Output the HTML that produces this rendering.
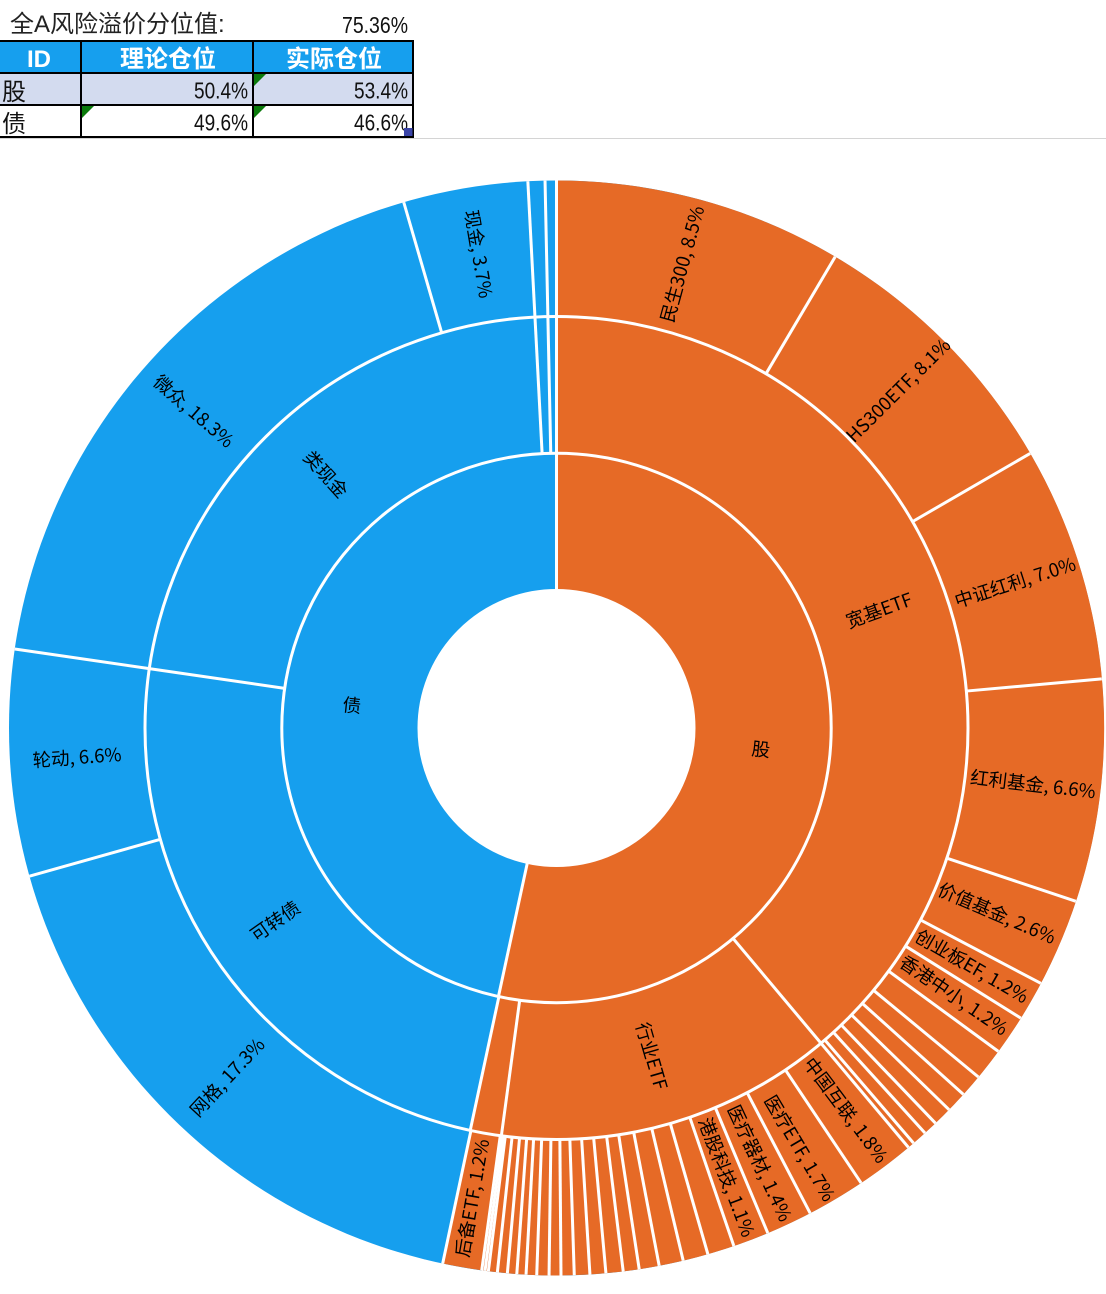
<!DOCTYPE html>
<html><head><meta charset="utf-8"><title>风险溢价</title>
<style>
html,body{margin:0;padding:0;background:#fff;width:1106px;height:1294px;overflow:hidden}
svg{display:block}
.t{font-family:"Liberation Sans","Noto Sans CJK SC",sans-serif;fill:#111}
.n{font-size:23px;text-anchor:end}
.h{font-family:"Liberation Sans","Noto Sans CJK SC",sans-serif;font-size:24px;font-weight:700;fill:#fff;text-anchor:middle}
.c text{font-family:"Noto Sans CJK SC","WenQuanYi Zen Hei",sans-serif;font-size:18.5px;fill:#000;text-anchor:middle;dominant-baseline:central}
.w{stroke:#fff;stroke-width:3;fill:none}
</style></head><body>
<svg xmlns="http://www.w3.org/2000/svg" width="1106" height="1294" viewBox="0 0 1106 1294">
<defs>
<line id="a" x1="556.5" y1="180.5" x2="556.5" y2="316.5" stroke="#fff" stroke-width="3"/>
<line id="b" x1="556.5" y1="316.5" x2="556.5" y2="453.3" stroke="#fff" stroke-width="3"/>
<line id="d" x1="556.5" y1="453.3" x2="556.5" y2="590" stroke="#fff" stroke-width="3"/>
</defs>

<!-- table -->
<text class="t" x="10" y="32" font-size="24" style="fill:#222">全A风险溢价分位值:</text>
<text class="t n" x="408" y="33" textLength="66" lengthAdjust="spacingAndGlyphs">75.36%</text>
<rect x="0" y="138" width="1106" height="1" fill="#d4d4d4"/>
<rect x="0" y="41" width="413" height="32" fill="#169FEE"/>
<rect x="0" y="73" width="413" height="32" fill="#D3DBEF"/>
<rect x="0" y="105" width="413" height="32" fill="#fff"/>
<g stroke="#000" stroke-width="2">
<line x1="0" y1="41" x2="414" y2="41"/><line x1="0" y1="73" x2="414" y2="73"/>
<line x1="0" y1="105" x2="414" y2="105"/><line x1="0" y1="137" x2="414" y2="137"/>
<line x1="81" y1="40" x2="81" y2="138"/><line x1="253" y1="40" x2="253" y2="138"/><line x1="413" y1="40" x2="413" y2="138"/>
</g>
<text class="h" x="39" y="67">ID</text>
<text class="h" x="168" y="67">理论仓位</text>
<text class="h" x="334" y="67">实际仓位</text>
<text class="t" x="2" y="100" font-size="24">股</text>
<text class="t" x="2" y="132" font-size="24">债</text>
<text class="t n" x="248" y="98.5" textLength="54" lengthAdjust="spacingAndGlyphs">50.4%</text>
<text class="t n" x="408" y="98.5" textLength="54" lengthAdjust="spacingAndGlyphs">53.4%</text>
<text class="t n" x="248" y="130.5" textLength="54" lengthAdjust="spacingAndGlyphs">49.6%</text>
<text class="t n" x="408" y="130.5" textLength="54" lengthAdjust="spacingAndGlyphs">46.6%</text>
<g fill="#0B7A0B">
<polygon points="254,74 266,74 254,86"/>
<polygon points="82,106 94,106 82,118"/>
<polygon points="254,106 266,106 254,118"/>
</g>
<rect x="404" y="128" width="8.5" height="8" fill="#3B45A8"/>

<!-- sunburst fills -->
<circle cx="556.5" cy="728" r="547.5" fill="#169FEE"/>
<path d="M556.5 728V180.5A547.5 547.5 0 1 1 442.2 1263.4Z" fill="#E66A26"/>
<circle class="w" cx="556.5" cy="728" r="411.5"/>
<circle class="w" cx="556.5" cy="728" r="274.7"/>
<circle cx="556.5" cy="728" r="138.5" fill="#fff" stroke="#fff" stroke-width="1"/>

<!-- inner ring radials -->
<use href="#d" transform="rotate(0 556.5 728)"/>
<use href="#d" transform="rotate(192.2 556.5 728)"/>

<!-- middle ring radials -->
<use href="#b" transform="rotate(0 556.5 728)"/>
<use href="#b" transform="rotate(140 556.5 728)"/>
<use href="#b" transform="rotate(187.7 556.5 728)"/>
<use href="#b" transform="rotate(192.1 556.5 728)"/>
<use href="#b" transform="rotate(278.3 556.5 728)"/>
<use href="#b" transform="rotate(357 556.5 728)"/>
<use href="#b" transform="rotate(358.8 556.5 728)"/>

<!-- outer ring radials -->
<use href="#a" transform="rotate(0 556.5 728)"/>
<use href="#a" transform="rotate(30.6 556.5 728)"/>
<use href="#a" transform="rotate(59.9 556.5 728)"/>
<use href="#a" transform="rotate(84.85 556.5 728)"/>
<use href="#a" transform="rotate(108.45 556.5 728)"/>
<use href="#a" transform="rotate(117.8 556.5 728)"/>
<use href="#a" transform="rotate(122 556.5 728)"/>
<use href="#a" transform="rotate(126.2 556.5 728)"/>
<use href="#a" transform="rotate(129.6 556.5 728)"/>
<use href="#a" transform="rotate(132 556.5 728)"/>
<use href="#a" transform="rotate(134.2 556.5 728)"/>
<use href="#a" transform="rotate(136.2 556.5 728)"/>
<use href="#a" transform="rotate(137.7 556.5 728)"/>
<use href="#a" transform="rotate(139.3 556.5 728)"/>
<use href="#a" transform="rotate(140 556.5 728)"/>
<use href="#a" transform="rotate(146.2 556.5 728)"/>
<use href="#a" transform="rotate(152.4 556.5 728)"/>
<use href="#a" transform="rotate(157.3 556.5 728)"/>
<use href="#a" transform="rotate(161.1 556.5 728)"/>
<use href="#a" transform="rotate(163.95 556.5 728)"/>
<use href="#a" transform="rotate(166.62 556.5 728)"/>
<use href="#a" transform="rotate(169.19 556.5 728)"/>
<use href="#a" transform="rotate(171.31 556.5 728)"/>
<use href="#a" transform="rotate(173 556.5 728)"/>
<use href="#a" transform="rotate(174.82 556.5 728)"/>
<use href="#a" transform="rotate(176.5 556.5 728)"/>
<use href="#a" transform="rotate(178.14 556.5 728)"/>
<use href="#a" transform="rotate(179.53 556.5 728)"/>
<use href="#a" transform="rotate(180.78 556.5 728)"/>
<use href="#a" transform="rotate(182.07 556.5 728)"/>
<use href="#a" transform="rotate(183.19 556.5 728)"/>
<use href="#a" transform="rotate(184.16 556.5 728)"/>
<use href="#a" transform="rotate(185.15 556.5 728)"/>
<use href="#a" transform="rotate(186.2 556.5 728)"/>
<use href="#a" transform="rotate(187.15 556.5 728)"/>
<use href="#a" transform="rotate(187.5 556.5 728)"/>
<use href="#a" transform="rotate(187.85 556.5 728)"/>
<use href="#a" transform="rotate(192 556.5 728)"/>
<use href="#a" transform="rotate(254.3 556.5 728)"/>
<use href="#a" transform="rotate(278.3 556.5 728)"/>
<use href="#a" transform="rotate(343.8 556.5 728)"/>
<use href="#a" transform="rotate(357 556.5 728)"/>
<use href="#a" transform="rotate(358.8 556.5 728)"/>

<!-- labels -->
<g class="c">
<text x="761" y="749" transform="rotate(6 761 749)">股</text>
<text x="352" y="705" transform="rotate(6 352 705)">债</text>
<text x="879" y="610" transform="rotate(-20 879 610)">宽基ETF</text>
<text x="652" y="1056" transform="rotate(73.8 652 1056)">行业ETF</text>
<text x="326" y="474" transform="rotate(47.9 326 474)">类现金</text>
<text x="275" y="921" transform="rotate(-35 275 921)">可转债</text>
<text x="682" y="264" transform="rotate(-74.7 682 264)">民生300, 8.5%</text>
<text x="898" y="390" transform="rotate(-44.8 898 390)">HS300ETF, 8.1%</text>
<text x="1015" y="582" transform="rotate(-17.7 1015 582)">中证红利, 7.0%</text>
<text x="1033" y="784" transform="rotate(6.7 1033 784)">红利基金, 6.6%</text>
<text x="997" y="913" transform="rotate(23.25 997 913)">价值基金, 2.6%</text>
<text x="972" y="966" transform="rotate(30 972 966)">创业板EF, 1.2%</text>
<text x="954" y="995" transform="rotate(34.2 954 995)">香港中小, 1.2%</text>
<text x="846" y="1110" transform="rotate(53.1 846 1110)">中国互联, 1.8%</text>
<text x="800" y="1148" transform="rotate(59.3 800 1148)">医疗ETF, 1.7%</text>
<text x="760" y="1163" transform="rotate(64.85 760 1163)">医疗器材, 1.4%</text>
<text x="727" y="1177" transform="rotate(69.2 727 1177)">港股科技, 1.1%</text>
<text x="472" y="1198" transform="rotate(-80 472 1198)">后备ETF, 1.2%</text>
<text x="227" y="1077" transform="rotate(-47 227 1077)">网格, 17.3%</text>
<text x="77" y="757" transform="rotate(-4 77 757)">轮动, 6.6%</text>
<text x="194" y="411" transform="rotate(41 194 411)">微众, 18.3%</text>
<text x="479" y="254" transform="rotate(80.4 479 254)">现金, 3.7%</text>
</g>
</svg>
</body></html>
